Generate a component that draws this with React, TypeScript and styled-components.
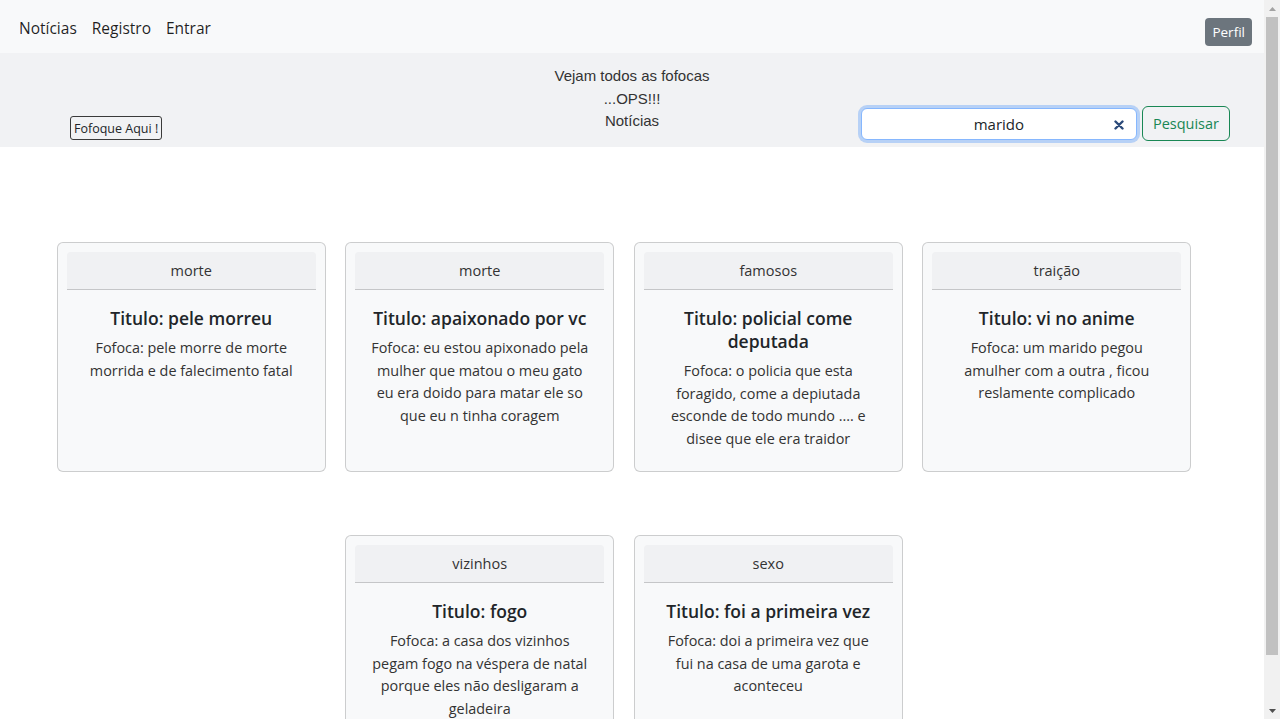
import React from "react";
import styled, { createGlobalStyle } from "styled-components";

const Global = createGlobalStyle`
  html, body { margin: 0; padding: 0; background: #ffffff; overflow: hidden; }
  body { font-family: "Segoe UI", "Open Sans", "Noto Sans", sans-serif; color: #212529; }
  * { box-sizing: border-box; }
`;

const Shell = styled.div`
  display: flex;
  height: 100vh;
`;

const Page = styled.div`
  flex: 1;
  min-width: 0;
  overflow: hidden;
`;

const ScrollRail = styled.div`
  width: 16px;
  flex-shrink: 0;
  background: #f1f1f1;
  display: flex;
  flex-direction: column;
  align-items: center;
`;

const ArrowBtn = styled.div`
  height: 17px;
  width: 100%;
  display: flex;
  align-items: center;
  justify-content: center;
`;

const Thumb = styled.div`
  width: 12px;
  height: 638px;
  background: #c1c1c1;
`;

const RailSpacer = styled.div`
  flex: 1;
`;

const Navbar = styled.nav`
  height: 53px;
  background: #f8f9fa;
  display: flex;
  align-items: center;
  padding: 0 12px 0 19px;
`;

const NavLinks = styled.div`
  display: flex;
  gap: 15px;
  align-items: center;
  margin-top: 2px;
`;

const NavLink = styled.a`
  font-size: 15.5px;
  color: rgba(0, 0, 0, 0.88);
  text-decoration: none;
`;

const PerfilButton = styled.button`
  margin-left: auto;
  margin-top: 10px;
  height: 28px;
  padding: 0 7px;
  border: none;
  border-radius: 4px;
  background: #6c757d;
  color: #fff;
  font-family: inherit;
  font-size: 13.5px;
`;

const Hero = styled.section`
  height: 94px;
  background: #f1f2f4;
  display: grid;
  grid-template-columns: 1fr auto 1fr;
`;

const HeroLeft = styled.div`
  display: flex;
  align-items: flex-end;
  padding: 0 0 7px 70px;
`;

const OutlineSmall = styled.button`
  height: 24px;
  padding: 0 3px;
  border: 1px solid #3a3a3a;
  border-radius: 3px;
  background: transparent;
  color: #212529;
  font-family: inherit;
  font-size: 12.5px;
`;

const HeroCenter = styled.div`
  padding-top: 12px;
  text-align: center;
  font-family: "Liberation Sans", Arial, sans-serif;
  font-size: 15px;
  line-height: 22.5px;
  color: #333333;
`;

const SearchForm = styled.form`
  display: flex;
  align-items: flex-end;
  justify-content: flex-end;
  gap: 5px;
  padding: 0 34px 6px 0;
`;

const InputWrap = styled.div`
  position: relative;
  width: 276px;
  height: 32px;
  margin-bottom: 1px;
`;

const SearchInput = styled.input`
  width: 100%;
  height: 100%;
  border: 1px solid #86b7fe;
  border-radius: 6px;
  box-shadow: 0 0 0 3px rgba(13, 110, 253, 0.25);
  background: #fff;
  text-align: center;
  font-family: inherit;
  font-size: 15px;
  color: #212529;
  outline: none;
  padding: 0 10px;
`;

const ClearIcon = styled.svg`
  position: absolute;
  right: 13px;
  top: 12px;
  width: 10px;
  height: 10px;
`;

const SuccessOutline = styled.button`
  height: 35px;
  padding: 0 10px;
  border: 1px solid #198754;
  border-radius: 6px;
  background: transparent;
  color: #198754;
  font-family: inherit;
  font-size: 14.5px;
`;

const CardGrid = styled.main`
  display: flex;
  flex-wrap: wrap;
  justify-content: center;
  gap: 63px 19.5px;
  padding: 95px 16px 3px 0;
`;

const Card = styled.article`
  width: 269px;
  height: 230px;
  border: 1px solid rgba(0, 0, 0, 0.175);
  border-radius: 6px;
  background: #f8f9fa;
  padding: 9px;
  display: flex;
  flex-direction: column;
`;

const CardHeader = styled.div`
  height: 38px;
  background: #f0f1f3;
  border-bottom: 1px solid rgba(0, 0, 0, 0.175);
  border-radius: 4px 4px 0 0;
  display: flex;
  align-items: center;
  justify-content: center;
  font-size: 14.5px;
  color: #333;
`;

const CardBody = styled.div`
  padding: 17px 15px 0;
  text-align: center;
`;

const CardTitle = styled.h5`
  margin: 0 -6px 7px;
  font-size: 17.5px;
  font-weight: 600;
  line-height: 23px;
  color: #212529;
`;

const CardText = styled.p`
  margin: 0;
  font-size: 14.4px;
  line-height: 22.5px;
  color: #333;
`;

const gossip = [
  { cat: "morte", title: "pele morreu", text: "pele morre de morte morrida e de falecimento fatal" },
  { cat: "morte", title: "apaixonado por vc", text: "eu estou apixonado pela mulher que matou o meu gato eu era doido para matar ele so que eu n tinha coragem" },
  { cat: "famosos", title: "policial come deputada", text: "o policia que esta foragido, come a depiutada esconde de todo mundo .... e disee que ele era traidor" },
  { cat: "traição", title: "vi no anime", text: "um marido pegou amulher com a outra , ficou reslamente complicado" },
  { cat: "vizinhos", title: "fogo", text: "a casa dos vizinhos pegam fogo na véspera de natal porque eles não desligaram a geladeira" },
  { cat: "sexo", title: "foi a primeira vez", text: "doi a primeira vez que fui na casa de uma garota e aconteceu" },
];

export default function App() {
  return (
    <>
      <Global />
      <Shell>
        <Page>
          <Navbar>
            <NavLinks>
              <NavLink href="#">Notícias</NavLink>
              <NavLink href="#">Registro</NavLink>
              <NavLink href="#">Entrar</NavLink>
            </NavLinks>
            <PerfilButton>Perfil</PerfilButton>
          </Navbar>
          <Hero>
            <HeroLeft>
              <OutlineSmall>Fofoque Aqui !</OutlineSmall>
            </HeroLeft>
            <HeroCenter>
              <div>Vejam todos as fofocas</div>
              <div>...OPS!!!</div>
              <div>Notícias</div>
            </HeroCenter>
            <SearchForm onSubmit={(e) => e.preventDefault()}>
              <InputWrap>
                <SearchInput type="text" defaultValue="marido" />
                <ClearIcon viewBox="0 0 10 10">
                  <path d="M1.5 1.5 L8.5 8.5 M8.5 1.5 L1.5 8.5" stroke="#2b4a7a" strokeWidth="2.4" strokeLinecap="round" />
                </ClearIcon>
              </InputWrap>
              <SuccessOutline type="submit">Pesquisar</SuccessOutline>
            </SearchForm>
          </Hero>
          <CardGrid>
            {gossip.map((g, i) => (
              <Card key={i}>
                <CardHeader>{g.cat}</CardHeader>
                <CardBody>
                  <CardTitle>Titulo: {g.title}</CardTitle>
                  <CardText>Fofoca: {g.text}</CardText>
                </CardBody>
              </Card>
            ))}
          </CardGrid>
        </Page>
        <ScrollRail>
          <ArrowBtn>
            <svg width="7" height="4" viewBox="0 0 7 4"><path d="M0 4 L3.5 0 L7 4 Z" fill="#a3a3a3" /></svg>
          </ArrowBtn>
          <Thumb />
          <RailSpacer />
          <ArrowBtn>
            <svg width="7" height="4" viewBox="0 0 7 4"><path d="M0 0 L3.5 4 L7 0 Z" fill="#505050" /></svg>
          </ArrowBtn>
        </ScrollRail>
      </Shell>
    </>
  );
}
